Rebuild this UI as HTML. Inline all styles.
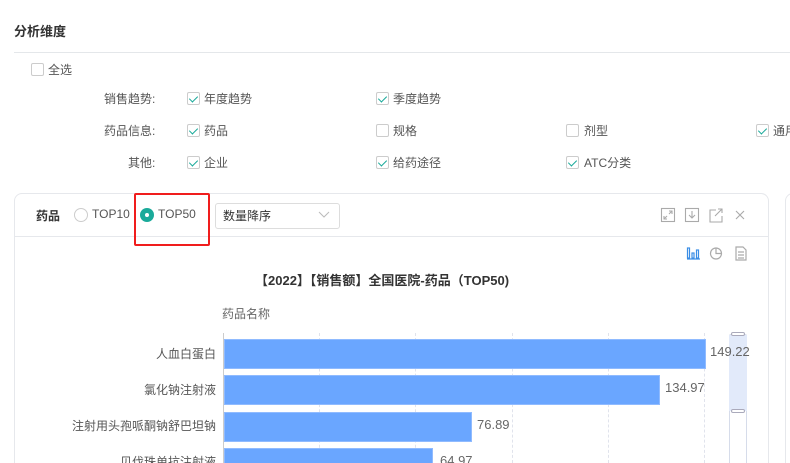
<!DOCTYPE html>
<html><head><meta charset="utf-8"><style>
*{margin:0;padding:0;box-sizing:border-box}
html,body{width:790px;height:463px;overflow:hidden;background:#fff}
body{font-family:"Liberation Sans","Noto Sans CJK SC",sans-serif;font-size:12px;color:#555}
#w{position:relative;width:790px;height:463px;overflow:hidden}
.a{position:absolute;white-space:nowrap}
.cb{position:absolute;width:13px;height:13px;border:1px solid #ccc;border-radius:2px;background:#fff}
.cb.on::after{content:"";position:absolute;left:3px;top:1px;width:4px;height:7px;border:solid #1aaa9a;border-width:0 1.3px 1.3px 0;transform:rotate(45deg)}
.bar{position:absolute;left:224px;height:30px;background:#6aa6ff;border:1px solid #90bbff}
.grid{position:absolute;top:333px;height:130px;border-left:1px dashed #e0e3ec}
.val{position:absolute;font-size:13px;color:#666}
.lbl{position:absolute;right:574px;font-size:12px;color:#555;text-align:right}
</style></head><body><div id="w">
<div class="a" style="left:14px;top:21px;font-size:13px;font-weight:bold;color:#333">分析维度</div>
<div class="a" style="left:14px;top:52px;width:776px;border-top:1px solid #e4e7ea"></div>
<div class="cb" style="left:31px;top:63px"></div><div class="a" style="left:48px;top:61px">全选</div>

<div class="a" style="left:104px;top:90px">销售趋势:</div>
<div class="cb on" style="left:187px;top:92px"></div><div class="a" style="left:204px;top:90px">年度趋势</div>
<div class="cb on" style="left:376px;top:92px"></div><div class="a" style="left:393px;top:90px">季度趋势</div>

<div class="a" style="left:104px;top:122px">药品信息:</div>
<div class="cb on" style="left:187px;top:124px"></div><div class="a" style="left:204px;top:122px">药品</div>
<div class="cb" style="left:376px;top:124px"></div><div class="a" style="left:393px;top:122px">规格</div>
<div class="cb" style="left:566px;top:124px"></div><div class="a" style="left:584px;top:122px">剂型</div>
<div class="cb on" style="left:756px;top:124px"></div><div class="a" style="left:773px;top:122px">通用</div>

<div class="a" style="left:128px;top:154px">其他:</div>
<div class="cb on" style="left:187px;top:156px"></div><div class="a" style="left:204px;top:154px">企业</div>
<div class="cb on" style="left:376px;top:156px"></div><div class="a" style="left:393px;top:154px">给药途径</div>
<div class="cb on" style="left:566px;top:156px"></div><div class="a" style="left:584px;top:154px">ATC分类</div>

<div class="a" style="left:14px;top:193px;width:755px;height:290px;border:1px solid #e6e8ec;border-radius:8px"></div>
<div class="a" style="left:785px;top:193px;width:20px;height:290px;border:1px solid #e6e8ec;border-radius:8px"></div>
<div class="a" style="left:15px;top:236px;width:753px;border-top:1px solid #e6e8ec"></div>
<div class="a" style="left:36px;top:207px;font-weight:bold;color:#333">药品</div>
<div class="a" style="left:74px;top:208px;width:14px;height:14px;border:1px solid #ccc;border-radius:50%"></div>
<div class="a" style="left:92px;top:207px;color:#555">TOP10</div>
<div class="a" style="left:140px;top:208px;width:14px;height:14px;border-radius:50%;background:#1aaa9a"><div style="position:absolute;left:5px;top:5px;width:4px;height:4px;border-radius:50%;background:#fff"></div></div>
<div class="a" style="left:158px;top:207px;color:#555">TOP50</div>
<div class="a" style="left:134px;top:193px;width:76px;height:53px;border:2px solid #f01d1d;border-radius:2px"></div>
<div class="a" style="left:215px;top:203px;width:125px;height:26px;border:1px solid #ddd;border-radius:3px"></div>
<div class="a" style="left:223px;top:207px;color:#333">数量降序</div>
<svg class="a" style="left:318px;top:211px" width="12" height="8"><path d="M1 1l5 5 5-5" fill="none" stroke="#bbb"/></svg>

<svg class="a" style="left:660px;top:207px" width="90" height="16" fill="none" stroke="#aaa" stroke-width="1.1">
<rect x="1.5" y="1.5" width="13" height="13"/><path d="M4 12l3-3M4 9v3h3M12 4l-3 3M12 7V4H9"/>
<rect x="25.5" y="1.5" width="13" height="13"/><path d="M32 4v7M29 8l3 3 3-3"/>
<path d="M56 3h-6v12h12v-6M55 9l7-7M58 2h4v4"/>
<path d="M76 4l8 8M84 4l-8 8"/>
</svg>
<svg class="a" style="left:685px;top:245px" width="65" height="16" fill="none" stroke-width="1.2">
<path d="M2 14h13" stroke="#3a8ee6"/><rect x="2.5" y="3" width="2" height="10" stroke="#3a8ee6"/><rect x="7" y="8" width="2" height="5" stroke="#3a8ee6"/><rect x="11.5" y="5" width="2" height="8" stroke="#3a8ee6"/>
<circle cx="31" cy="8.5" r="5.5" stroke="#aaa"/><path d="M31 3v5.5h5.5" stroke="#aaa"/>
<path d="M51 2h7l3 3v10H51z M53 7h6M53 10h6M53 13h6" stroke="#aaa"/>
</svg>

<div class="a" style="left:255px;top:270px;font-size:13px;font-weight:bold;color:#333">【2022】【销售额】全国医院-药品（TOP50)</div>
<div class="a" style="left:222px;top:305px;color:#666">药品名称</div>

<div class="grid" style="left:319px"></div><div class="grid" style="left:415px"></div><div class="grid" style="left:512px"></div><div class="grid" style="left:608px"></div><div class="grid" style="left:704px"></div>
<div class="a" style="left:223px;top:333px;height:130px;border-left:1px solid #ccc"></div>

<div class="a" style="left:729px;top:334px;width:18px;height:140px;border:1px solid #d6dcea;border-radius:2px"></div>
<div class="a" style="left:729px;top:335px;width:18px;height:76px;background:#e2eafa"></div>
<div class="a" style="left:731px;top:332px;width:14px;height:4px;border:1px solid #aab;border-radius:2px;background:#fff"></div>
<div class="a" style="left:731px;top:409px;width:14px;height:4px;border:1px solid #aab;border-radius:2px;background:#fff"></div>

<div class="bar" style="top:339px;width:482px"></div><div class="val" style="left:710px;top:344px">149.22</div>
<div class="bar" style="top:375px;width:436px"></div><div class="val" style="left:665px;top:380px">134.97</div>
<div class="bar" style="top:412px;width:248px"></div><div class="val" style="left:477px;top:417px">76.89</div>
<div class="bar" style="top:448px;width:209px"></div><div class="val" style="left:440px;top:453px">64.97</div>

<div class="lbl" style="top:345px">人血白蛋白</div>
<div class="lbl" style="top:381px">氯化钠注射液</div>
<div class="lbl" style="top:417px">注射用头孢哌酮钠舒巴坦钠</div>
<div class="lbl" style="top:453px">贝伐珠单抗注射液</div>
</div></body></html>
